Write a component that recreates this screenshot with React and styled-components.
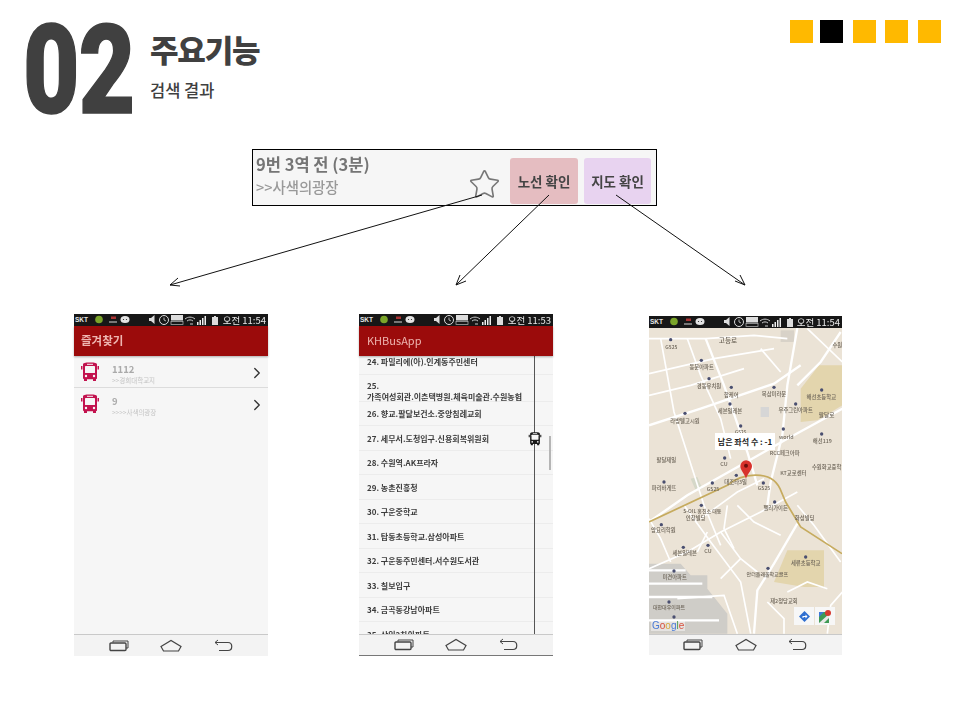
import React from "react";
import styled, { createGlobalStyle } from "styled-components";
import { ChevronRight, Star } from "lucide-react";

const GlobalStyle = createGlobalStyle`
  html, body {
    margin: 0;
    background: #fff;
    font-family: "Noto Sans CJK KR", "Noto Sans", sans-serif;
  }
`;

const Page = styled.div`
  position: relative;
  width: 960px;
  height: 720px;
  overflow: hidden;
`;

const Header = styled.header`
  display: flex;
  height: 149px;
  box-sizing: border-box;
  padding: 7px 19px 0 23px;
  color: #404040;
`;

const ChapterNo = styled.div`
  flex: none;
  width: 160px;
  height: 128px;
  margin-right: -33px;
  font: 900 125px/128px Roboto, sans-serif;
  transform: scaleX(0.78);
  transform-origin: left center;
  letter-spacing: -1px;
  -webkit-text-stroke: 1.5px #404040;
`;

const Titles = styled.div`
  flex: 1;
  padding-top: 19px;
`;

const Title = styled.h1`
  margin: 0;
  font-size: 31px;
  line-height: 46px;
  font-weight: 900;
  letter-spacing: -1.2px;
`;

const Subtitle = styled.h2`
  margin: 8px 0 0;
  font-size: 16.5px;
  line-height: 20px;
  font-weight: 500;
`;

const Squares = styled.div`
  display: flex;
  align-items: flex-start;
  padding-top: 13px;
`;

const Square = styled.span`
  width: 23px;
  height: 23px;
  margin-left: ${(p) => p.$gap}px;
  background: ${(p) => (p.$dark ? "#000" : "#ffb900")};
`;

const Result = styled.section`
  display: flex;
  align-items: stretch;
  width: 405px;
  height: 57px;
  box-sizing: border-box;
  margin-left: 252px;
  padding: 2px 5px 1px 3px;
  border: 1px solid #000;
  background: #f6f6f6;
  filter: blur(0.4px);
`;

const ResultText = styled.div`
  flex: 1;
`;

const ResultTitle = styled.div`
  font-size: 16.5px;
  line-height: 25px;
  font-weight: 700;
  color: #757575;
`;

const ResultStop = styled.div`
  font-size: 14.4px;
  line-height: 19px;
  font-weight: 500;
  color: #999;
`;

const StarSlot = styled.div`
  display: flex;
  align-items: flex-end;
  margin-right: 9px;
  padding-bottom: 3px;
  color: #777;
`;

const ResultButton = styled.div`
  display: flex;
  align-items: center;
  justify-content: center;
  width: ${(p) => p.$w}px;
  margin: 6px 0 0 ${(p) => p.$gap}px;
  border-radius: 3px;
  background: ${(p) => p.$bg};
  font-size: 13.5px;
  font-weight: 700;
  color: #444;
  white-space: nowrap;
`;

const Arrows = styled.svg`
  position: absolute;
  left: 0;
  top: 0;
  pointer-events: none;
`;

const Phones = styled.div`
  display: grid;
  grid-template-columns: 285px 290px 193px;
  margin: 108px 0 0 74px;
`;

const Phone = styled.div`
  display: flex;
  flex-direction: column;
  width: ${(p) => p.$w}px;
  height: ${(p) => p.$h}px;
  margin-top: ${(p) => p.$top || 0}px;
  filter: blur(0.45px);
`;

const StatusBar = styled.div`
  display: flex;
  flex: none;
  align-items: center;
  height: 12px;
  padding: 0 2px 0 1px;
  background: #171717;
  color: #e8e8e8;
`;

const Carrier = styled.span`
  width: 17px;
  font: 700 6.5px/12px "Liberation Sans", sans-serif;
`;

const Clock = styled.span`
  margin-left: auto;
  font-size: 9.5px;
  line-height: 12px;
  white-space: nowrap;
`;

const AppBar = styled.div`
  flex: none;
  height: 30px;
  padding-left: ${(p) => p.$pad}px;
  background: #9b0b0b;
  box-shadow: 0 1px 2px rgba(0, 0, 0, 0.3);
  font-size: ${(p) => p.$size}px;
  font-weight: ${(p) => p.$weight};
  line-height: 28px;
  color: #eeb5b0;
  z-index: 1;
`;

const ListBody = styled.div`
  position: relative;
  flex: 1;
  overflow: hidden;
  background: #f6f6f6;
`;

const FavRow = styled.div`
  display: flex;
  align-items: center;
  height: 31px;
  border-bottom: 1px solid ${(p) => (p.$plain ? "transparent" : "#dcdcdc")};
  padding: 0 2px 0 6px;
  color: #333;
`;

const FavText = styled.div`
  flex: 1;
  padding: 5px 0 0 12px;
`;

const FavNo = styled.div`
  font-size: 9.5px;
  line-height: 13px;
  font-weight: 700;
  color: #aaa;
`;

const FavStop = styled.div`
  font-size: 6.5px;
  line-height: 9px;
  color: #c4c4c4;
`;

const FavChevron = styled(ChevronRight)`
  margin-top: 2px;
`;

const StopRow = styled.div`
  display: flex;
  align-items: center;
  box-sizing: border-box;
  height: ${(p) => p.$h}px;
  padding: ${(p) => p.$pt || 0}px 0 ${(p) => p.$pb || 0}px 8px;
  border-bottom: 1px solid #ececec;
  font-size: 8px;
  line-height: 11px;
  font-weight: 700;
  color: #3c3c3c;
  white-space: nowrap;
`;

const Track = styled.div`
  position: absolute;
  left: 175px;
  top: 0;
  bottom: 0;
  width: 1px;
  background: #555;
`;

const TrackBus = styled.div`
  position: absolute;
  left: 169px;
  top: 76px;
  line-height: 0;
`;

const ScrollThumb = styled.div`
  position: absolute;
  right: 2px;
  top: 80px;
  width: 2px;
  height: 34px;
  background: #b5b5b5;
`;

const MapArea = styled.div`
  position: relative;
  flex: 1;
  overflow: hidden;
  line-height: 0;
  background: #ebe3d6;
`;

const SeatTip = styled.div`
  position: absolute;
  left: 66px;
  top: 105px;
  width: 60px;
  height: 17px;
  background: #fff;
  font-size: 8px;
  font-weight: 700;
  line-height: 17px;
  text-align: center;
  color: #222;
  white-space: nowrap;
`;

const GoogleMark = styled.div`
  position: absolute;
  left: 2px;
  bottom: 3px;
  padding: 0 1px;
  font: 400 10px/11px "Liberation Sans", sans-serif;
  background: rgba(255, 255, 255, 0.45);
`;

const GoogleLetter = styled.span`
  color: ${(p) => p.$color};
`;

const MapTools = styled.div`
  position: absolute;
  right: 7px;
  bottom: 9px;
  display: flex;
  gap: 1px;
  line-height: 0;
`;

const MapTool = styled.div`
  display: flex;
  align-items: center;
  justify-content: center;
  width: 20px;
  height: 18px;
  background: #f7f7f7;
`;

const NavBar = styled.div`
  flex: none;
  display: flex;
  align-items: center;
  justify-content: center;
  gap: 30.5px;
  box-sizing: border-box;
  height: ${(p) => p.$h}px;
  border-top: 1px solid #c9c9c9;
  border-bottom: ${(p) => (p.$line ? "1px solid #777" : "0")};
  background: #f3f3f3;
  color: #444;
  line-height: 0;
`;

function StatusIcons() {
  return (
    <svg width="128" height="12" viewBox="0 0 128 12">
      <circle cx="7" cy="5.500" r="3.800" fill="#7ba52a" />
      <rect x="19" y="2.500" width="5" height="2.500" fill="#a33" />
      <rect x="17" y="7" width="8" height="2" fill="#777" />
      <ellipse cx="33" cy="5.500" rx="4.500" ry="3.500" fill="#e4e4e4" />
      <circle cx="31.500" cy="5.500" r=".6" fill="#222" />
      <circle cx="34.500" cy="5.500" r=".6" fill="#222" />
      <path d="M57 4h2l3.500-3v9L59 7h-2z" fill="#ddd" />
      <circle cx="72" cy="6" r="4.500" fill="none" stroke="#ddd" />
      <path d="M72 3.500v2.500l2 1" fill="none" stroke="#ddd" strokeWidth=".8" />
      <rect x="79" y="1" width="12" height="5.500" fill="#ddd" />
      <rect x="79" y="7.500" width="12" height="3" fill="none" stroke="#bbb" strokeWidth=".7" />
      <path d="M93 5c3-2.500 7-2.500 10 0M95 7c2-1.500 4-1.500 6 0" fill="none" stroke="#ccc" />
      <path d="M98 9.500h3v1h-3z" fill="#ccc" />
      <path d="M105 8h1.500v3H105zM107.500 6h1.500v5h-1.500zM110 4h1.500v7H110zM112.500 2h1.500v9h-1.500z" fill="#eee" />
      <rect x="120" y="3" width="6" height="8" fill="#ddd" />
      <rect x="122" y="2" width="2" height="1" fill="#ddd" />
    </svg>
  );
}

function BusIcon({ size, color }) {
  return (
    <svg width={size} height={size} viewBox="0 0 20 20">
      <path
        d="M3 2.500C3 1 5 .5 10 .5s7 .5 7 2V16c0 .8-.5 1.200-1 1.200V19h-3v-1.800H7V19H4v-1.800c-.5 0-1-.4-1-1.200z"
        fill={color}
      />
      <rect x="5" y="4" width="10" height="7" rx=".6" fill="#f6f6f6" />
      <rect x="7" y="1.800" width="6" height="1" fill="#f6f6f6" />
      <rect x="1" y="4" width="1.500" height="3.500" fill={color} />
      <rect x="17.500" y="4" width="1.500" height="3.500" fill={color} />
      <circle cx="6" cy="14" r="1.200" fill="#f6f6f6" />
      <circle cx="14" cy="14" r="1.200" fill="#f6f6f6" />
    </svg>
  );
}

function NavIcons() {
  return (
    <>
      <svg width="22" height="14" viewBox="0 0 22 14" fill="none" stroke="currentColor">
        <path d="M5 3.500V2h15v7h-2" />
        <rect x="2" y="4" width="16" height="7.500" rx="1" strokeWidth="1.400" />
      </svg>
      <svg width="22" height="14" viewBox="0 0 22 14" fill="none" stroke="currentColor">
        <path d="M1 7.500L11 1.500 21 7.500l-2.500 4.500h-15z" strokeWidth="1.200" />
      </svg>
      <svg width="22" height="14" viewBox="0 0 22 14" fill="none" stroke="currentColor">
        <path d="M2 3.500h13c5 0 5 8 0 8H6" strokeWidth="1.200" />
        <path d="M5 1L2 3.500 5 6" />
      </svg>
    </>
  );
}

const whiteRoads = [
  "470,68 440,240 425,390 390,530 380,600",
  "600,80 540,170 470,240",
  "25,360 180,310 400,235 480,180",
  "605,310 440,400 300,480 140,570 25,650",
  "195,100 250,240 320,440 350,540",
  "25,100 195,100 340,90 440,100",
  "60,100 100,320 190,600 240,720",
  "140,100 180,210 240,340 270,460",
  "25,205 220,160 400,130",
  "25,270 150,240 310,190",
  "360,130 420,200",
  "500,70 605,170",
  "180,640 290,560 370,520",
  "470,655 400,775 350,855 340,985",
  "130,600 210,710 300,830 330,985",
  "25,790 140,740 240,680 360,620 470,560",
  "240,680 300,760 350,800",
  "25,640 60,700 90,770",
  "290,600 340,650 420,690",
  "170,740 200,680",
  "240,820 300,760",
  "260,600 250,670 280,730",
  "470,600 520,660 600,770",
  "440,860 500,830 560,850",
  "560,985 570,900 605,860",
  "380,890 430,940 430,985",
  "110,880 250,870 290,985",
];

const grayBlocks = [
  "25,775 120,775 150,810 200,810 200,850 260,925 260,985 25,985",
];

const mapLabels = [
  ["고등로", 262, 113, 18],
  ["G525", 92, 131, 13],
  ["수원", 590, 125, 14],
  ["동문아파트", 183, 192, 14],
  ["경동유치원", 205, 248, 14],
  ["합케어", 272, 276, 14],
  ["복삼미라문", 400, 273, 14],
  ["해선초등학교", 542, 281, 14],
  ["세븐일레븐", 268, 322, 14],
  ["우주그린아파트", 465, 321, 14],
  ["라방텔고시원", 133, 352, 14],
  ["팔달로", 558, 335, 15],
  ["GS25", 300, 387, 12],
  ["world", 437, 400, 14],
  ["해선119", 545, 414, 14],
  ["RCC페크아파", 432, 449, 14],
  ["팔달제일", 77, 471, 14],
  ["CU", 250, 482, 14],
  ["수원화교중학", 558, 491, 14],
  ["KT교로센터", 458, 510, 14],
  ["대조타3일", 285, 536, 14],
  ["GS25", 217, 558, 13],
  ["GS25", 370, 555, 13],
  ["파리바게뜨", 70, 553, 14],
  ["헬리가이든", 405, 614, 14],
  ["S-OIL 홍진소 대동", 185, 622, 13],
  ["인창빌딩", 165, 643, 14],
  ["화성빌딩", 492, 645, 14],
  ["양요리학원", 68, 681, 14],
  ["세븐일레븐", 132, 749, 14],
  ["CU", 202, 742, 14],
  ["세류초등학교", 495, 778, 14],
  ["미견아파트", 102, 820, 14],
  ["안더돌래울학교골프", 380, 812, 13],
  ["제2청당교회", 430, 892, 14],
  ["대한대우이파트", 85, 910, 13],
];

const mapDots = [
  [90, 103], [182, 165], [205, 220], [272, 246], [400, 246], [268, 296],
  [465, 296], [543, 254], [133, 324], [300, 362], [428, 371], [543, 386],
  [252, 458], [287, 510], [368, 533], [215, 533], [70, 530], [182, 600],
  [402, 590], [62, 658], [128, 726], [202, 720], [495, 755], [382, 789],
  [100, 797], [85, 890], [100, 935],
];

function MapDrawing() {
  return (
    <svg width="193" height="306" viewBox="25 68 579 918" preserveAspectRatio="none">
      <path d="M480 250L535 180H605V300L530 345 480 350z" fill="#e3d5ad" />
      <path d="M440 735H550V845H490L400 830z" fill="#e3d5ad" />
      <path d="M360 305h25v30h-25z" fill="#d6d6d6" />
      <path d="M150 520l20-5 15 35-20 5z" fill="#d5d8c8" />
      <path d="M420 75h40v35h-40z" fill="#d8d2c8" />
      {grayBlocks.map((d) => (
        <polygon key={d} points={d} fill="#cfcdc8" />
      ))}
      {whiteRoads.map((d, i) => (
        <polyline key={d} points={d} fill="none" stroke="#fff" strokeWidth={i < 5 || i === 13 ? 7 : 5} />
      ))}
      <path d="M25 795h110M25 835h160M25 875h190M25 945h210" stroke="#fff" strokeWidth="7" fill="none" />
      <path
        d="M25 650L260 540C300 505 390 490 418 550L435 590 480 665 604 745"
        fill="none"
        stroke="#c6ab5e"
        strokeWidth="5"
      />
      {mapDots.map(([x, y]) => (
        <circle key={`${x}-${y}`} cx={x} cy={y} r="5" fill="#4a4f70" />
      ))}
      {mapLabels.map(([label, x, y, size]) => (
        <text
          key={`${label}-${x}`}
          x={x}
          y={y}
          fontSize={size + 2}
          fontWeight="500"
          fill="#6c6458"
          textAnchor="middle"
        >
          {label}
        </text>
      ))}
      <path d="M316 520c-6-18-17-25-17-38a17 17 0 0 1 35 0c0 13-12 20-18 38z" fill="#d8322c" />
      <circle cx="316" cy="481" r="6" fill="#6b0f0c" />
    </svg>
  );
}

const stops = [
  { label: "24. 파밀리에(아).인계동주민센터", h: 19, pb: 7 },
  { label: ["25.", "가족여성회관.이춘택병원.체육미술관.수원농협"], h: 27, pt: 5 },
  { label: "26. 향교.팔달보건소.중앙침례교회", h: 24 },
  { label: "27. 세무서.도청입구.신용회복위원회", h: 25 },
  { label: "28. 수원역.AK프라자", h: 24 },
  { label: "29. 농촌진흥청", h: 25 },
  { label: "30. 구운중학교", h: 24 },
  { label: "31. 탑동초등학교.삼성아파트", h: 25 },
  { label: "32. 구운동주민센터.서수원도서관", h: 24 },
  { label: "33. 칠보입구", h: 25 },
  { label: "34. 금곡동강남아파트", h: 24 },
  { label: "35. 삼익2차아파트", h: 25 },
];

const favourites = [
  { no: "1112", stop: ">>경희대학교지" },
  { no: "9", stop: ">>>>사색의광장", plain: true },
];

const squares = [
  { gap: 0 },
  { gap: 7, dark: true },
  { gap: 10 },
  { gap: 9 },
  { gap: 10 },
];

const googleLetters = [
  ["G", "#4a7bd6"],
  ["o", "#d8503c"],
  ["o", "#d8a93c"],
  ["g", "#4a7bd6"],
  ["l", "#4c9a50"],
  ["e", "#d8503c"],
];

export default function App() {
  return (
    <Page>
      <GlobalStyle />
      <Header>
        <ChapterNo>02</ChapterNo>
        <Titles>
          <Title>주요기능</Title>
          <Subtitle>검색 결과</Subtitle>
        </Titles>
        <Squares>
          {squares.map((s, i) => (
            <Square key={i} $gap={s.gap} $dark={s.dark} />
          ))}
        </Squares>
      </Header>

      <Result>
        <ResultText>
          <ResultTitle>9번 3역 전 (3분)</ResultTitle>
          <ResultStop>&gt;&gt;사색의광장</ResultStop>
        </ResultText>
        <StarSlot>
          <Star size={33} strokeWidth={1.2} />
        </StarSlot>
        <ResultButton $w={68} $gap={0} $bg="#e5bdc1">노선 확인</ResultButton>
        <ResultButton $w={67} $gap={6} $bg="#e8d3f0">지도 확인</ResultButton>
      </Result>

      <Phones>
        <Phone $w={194} $h={342}>
          <StatusBar>
            <Carrier>SKT</Carrier>
            <StatusIcons />
            <Clock>오전 11:54</Clock>
          </StatusBar>
          <AppBar $pad={7} $weight={700} $size={11.5}>즐겨찾기</AppBar>
          <ListBody>
            {favourites.map((f) => (
              <FavRow key={f.no} $plain={f.plain}>
                <BusIcon size={20} color="#c2124e" />
                <FavText>
                  <FavNo>{f.no}</FavNo>
                  <FavStop>{f.stop}</FavStop>
                </FavText>
                <FavChevron size={18} strokeWidth={1.8} />
              </FavRow>
            ))}
          </ListBody>
          <NavBar $h={22}>
            <NavIcons />
          </NavBar>
        </Phone>

        <Phone $w={194} $h={342}>
          <StatusBar>
            <Carrier>SKT</Carrier>
            <StatusIcons />
            <Clock>오전 11:53</Clock>
          </StatusBar>
          <AppBar $pad={8} $weight={400} $size={11}>KHBusApp</AppBar>
          <ListBody>
            {stops.map((s) => (
              <StopRow key={s.h + String(s.label)} $h={s.h} $pt={s.pt} $pb={s.pb}>
                {Array.isArray(s.label) ? (
                  <span>
                    {s.label[0]}
                    <br />
                    {s.label[1]}
                  </span>
                ) : (
                  s.label
                )}
              </StopRow>
            ))}
            <Track />
            <TrackBus>
              <BusIcon size={14} color="#1a1a1a" />
            </TrackBus>
            <ScrollThumb />
          </ListBody>
          <NavBar $h={22} $line>
            <NavIcons />
          </NavBar>
        </Phone>

        <Phone $w={193} $h={339} $top={2}>
          <StatusBar>
            <Carrier>SKT</Carrier>
            <StatusIcons />
            <Clock>오전 11:54</Clock>
          </StatusBar>
          <MapArea>
            <MapDrawing />
            <SeatTip>남은 좌석 수 : -1</SeatTip>
            <GoogleMark>
              {googleLetters.map(([letter, color], i) => (
                <GoogleLetter key={i} $color={color}>{letter}</GoogleLetter>
              ))}
            </GoogleMark>
            <MapTools>
              <MapTool>
                <svg width="11" height="11" viewBox="0 0 11 11">
                  <path d="M5.500 0L11 5.500 5.500 11 0 5.500z" fill="#2f6fd0" />
                  <path d="M3.500 7V5h3V3.500L8.500 5.500l-2 2V6H4.500v1z" fill="#fff" />
                </svg>
              </MapTool>
              <MapTool>
                <svg width="12" height="13" viewBox="0 0 12 13">
                  <path d="M0 2h10v11H0z" fill="#3f9a55" />
                  <path d="M0 13L10 4v4l-5 5z" fill="#e8e8e8" />
                  <path d="M0 2h5L0 7z" fill="#3f78d8" />
                  <circle cx="9" cy="3" r="3" fill="#d63a30" />
                </svg>
              </MapTool>
            </MapTools>
          </MapArea>
          <NavBar $h={21}>
            <NavIcons />
          </NavBar>
        </Phone>
      </Phones>

      <Arrows width="960" height="720" viewBox="0 0 960 720" fill="none" stroke="#111" strokeWidth="1">
        <path d="M482 195L170 285M178 278L170 285 180 286" />
        <path d="M549 195L456 285M460 275L456 285 466 281" />
        <path d="M616 195L745 285M735 281L745 285 740 275" />
      </Arrows>
    </Page>
  );
}
